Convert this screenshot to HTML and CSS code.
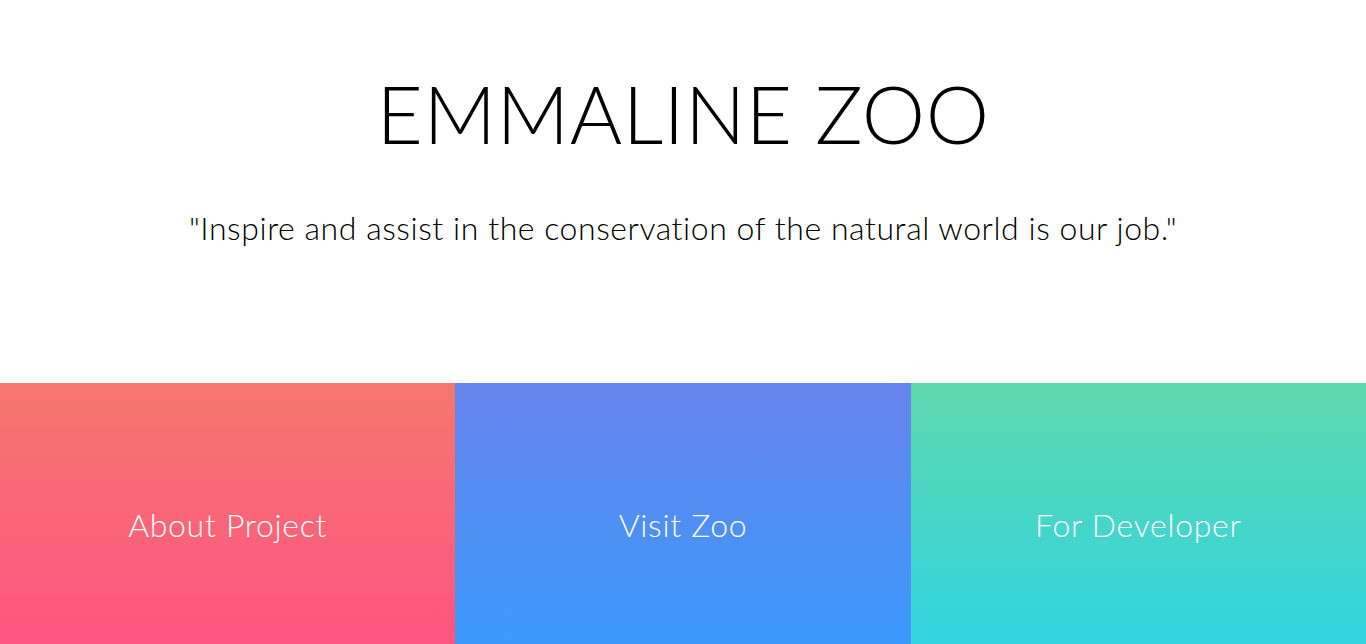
FILE: index.html
```html
<!DOCTYPE html>
<html>
<head>
<meta charset="utf-8">
<link rel="stylesheet" href="styles.css">
</head>
<body>
<header class="hero">
  <h1 class="title">EMMALINE ZOO</h1>
  <p class="motto">"Inspire and assist in the conservation of the natural world is our job."</p>
</header>
<nav class="tiles">
  <a class="tile tile-pink" href="#">About Project</a>
  <a class="tile tile-blue" href="#">Visit Zoo</a>
  <a class="tile tile-green" href="#">For Developer</a>
</nav>
</body>
</html>
```
FILE: styles.css
```css
html, body {
  margin: 0;
  padding: 0;
  background: #fff;
  font-family: "Lato", "Open Sans", sans-serif;
  font-weight: 300;
  color: #000;
  overflow: hidden;
}
.hero {
  height: 383px;
  display: flex;
  flex-direction: column;
  align-items: center;
  box-sizing: border-box;
  padding-top: 68px;
}
.title {
  margin: 0;
  font-size: 80px;
  font-weight: 300;
  line-height: 90px;
  letter-spacing: 0.5px;
}
.motto {
  margin: 50px 0 0;
  font-size: 32px;
  line-height: 40px;
  font-weight: 300;
  letter-spacing: 0.55px;
}
.tiles {
  display: flex;
  height: 282px;
}
.tile {
  flex: 1 1 0;
  display: flex;
  align-items: center;
  justify-content: center;
  color: #fff;
  text-decoration: none;
  font-size: 32px;
  font-weight: 300;
  letter-spacing: 0.7px;
}
.tile-pink { background: linear-gradient(#f5776e, #ff5282); }
.tile-blue { background: linear-gradient(#6684ec, #389bfd); }
.tile-green { background: linear-gradient(#5ed8ad, #2ed4e4); }
```
